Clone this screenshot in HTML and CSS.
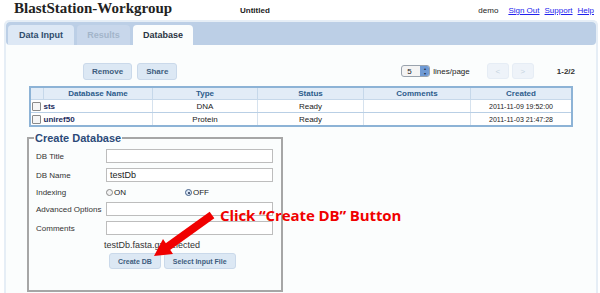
FILE: index.html
```html
<!DOCTYPE html>
<html lang="en">
<head>
    <meta charset="UTF-8">
    <title>BlastStation-Workgroup</title>
    <link rel="stylesheet" href="styles.css">
</head>
<body>
    <header class="topbar">
        <div class="brand">BlastStation-Workgroup</div>
        <div class="doc-title">Untitled</div>
        <div class="user">demo</div>
        <a href="#" class="toplink">Sign Out</a>
        <a href="#" class="toplink">Support</a>
        <a href="#" class="toplink">Help</a>
    </header>

    <div class="frame">
        <nav class="tabs">
            <a href="#" class="tab">Data Input</a>
            <a href="#" class="tab disabled">Results</a>
            <a href="#" class="tab active">Database</a>
        </nav>

        <div class="content">
            <div class="toolbar">
                <button class="button">Remove</button>
                <button class="button">Share</button>
                <div class="spacer"></div>
                <div class="select-box"><span>5</span><span class="stepper">&#9652;<br>&#9662;</span></div>
                <span class="per-page">lines/page</span>
                <button class="button faint">&lt;</button>
                <button class="button faint">&gt;</button>
                <span class="count">1-2/2</span>
            </div>

            <table class="db-table">
                <thead>
                    <tr>
                        <th class="cb"></th>
                        <th class="c-name">Database Name</th>
                        <th class="c-type">Type</th>
                        <th class="c-status">Status</th>
                        <th class="c-comments">Comments</th>
                        <th class="c-created">Created</th>
                    </tr>
                </thead>
                <tbody>
                    <tr>
                        <td class="cb"><span class="check"></span></td>
                        <td class="name">sts</td>
                        <td>DNA</td>
                        <td>Ready</td>
                        <td></td>
                        <td class="date">2011-11-09 19:52:00</td>
                    </tr>
                    <tr>
                        <td class="cb"><span class="check"></span></td>
                        <td class="name">uniref50</td>
                        <td>Protein</td>
                        <td>Ready</td>
                        <td></td>
                        <td class="date">2011-11-03 21:47:28</td>
                    </tr>
                </tbody>
            </table>

            <fieldset class="create">
                <legend>Create Database</legend>
                <div class="row">
                    <label>DB Title</label>
                    <span class="field"></span>
                </div>
                <div class="row">
                    <label>DB Name</label>
                    <span class="field">testDb</span>
                </div>
                <div class="row radios">
                    <label>Indexing</label>
                    <span class="radio"><span class="dot"></span>ON</span>
                    <span class="radio"><span class="dot on"></span>OFF</span>
                </div>
                <div class="row">
                    <label>Advanced Options</label>
                    <span class="field"></span>
                </div>
                <div class="row">
                    <label>Comments</label>
                    <span class="field"></span>
                </div>
                <div class="selected">testDb.fasta.gz selected</div>
                <div class="actions">
                    <button class="button small">Create DB</button>
                    <button class="button small">Select Input File</button>
                </div>
            </fieldset>
        </div>
    </div>

    <div class="callout">Click &ldquo;Create DB&rdquo; Button</div>
    <svg class="arrow" width="80" height="60" viewBox="0 0 80 60">
        <line x1="66" y1="7" x2="20" y2="40" stroke="#f00000" stroke-width="8"/>
        <polygon points="8,48 17,31 27,46" fill="#f00000"/>
    </svg>
</body>
</html>
```

FILE: styles.css
```css
body {
    margin: 0;
    background-color: white;
    font-family: "Liberation Sans", Arial, sans-serif;
    font-size: 8px;
    color: #222;
    position: relative;
    height: 293px;
    overflow: hidden;
}

.topbar {
    display: flex;
    align-items: flex-end;
    height: 17px;
    padding: 0 6px 0 14px;
    white-space: nowrap;
}

.brand {
    font-family: "Liberation Serif", "Times New Roman", serif;
    font-weight: bold;
    font-size: 15px;
    line-height: 17px;
    width: 226px;
}

.doc-title {
    font-weight: bold;
    font-size: 8px;
    line-height: 12px;
    flex-grow: 1;
}

.user {
    line-height: 12px;
    margin-right: 10px;
}

.toplink {
    color: #2222ee;
    line-height: 12px;
    margin-right: 5px;
}

.toplink:last-child {
    margin-right: 0;
}

.frame {
    margin: 3px 2px 0 4px;
    border: 2px solid #e6eef6;
    border-bottom: none;
    border-radius: 5px 5px 0 0;
    height: 273px;
    background-color: #fbfdfd;
}

.tabs {
    display: flex;
    align-items: flex-end;
    height: 23px;
    background-color: #bccfe6;
    border-radius: 4px;
    padding: 0 2px;
}

.tab {
    display: block;
    height: 20px;
    line-height: 20px;
    margin-right: 3px;
    border-radius: 4px 4px 0 0;
    background-color: #dde8f5;
    color: #304c6c;
    font-weight: bold;
    font-size: 9px;
    text-decoration: none;
    text-align: center;
    width: 66px;
}

.tab.disabled {
    width: 53px;
    background-color: #c8d7eb;
    color: #a3b5ca;
}

.tab.active {
    width: 60px;
    height: 23px;
    margin-bottom: -3px;
    background-color: #fbfdfd;
    color: #2a3442;
}

.content {
    padding: 17px 23px 0 23px;
}

.toolbar {
    display: flex;
    align-items: center;
    width: 546px;
    height: 18px;
    padding-left: 54px;
    box-sizing: border-box;
    white-space: nowrap;
}

.button {
    font-family: "Liberation Sans", Arial, sans-serif;
    font-size: 8px;
    font-weight: bold;
    color: #3e5d7e;
    background-color: #dce8f4;
    border: 1px solid #cad9ea;
    border-radius: 3px;
    height: 17px;
    padding: 0 8px;
    margin-right: 5px;
}

.button.faint {
    width: 22px;
    height: 16px;
    padding: 0;
    margin-right: 3px;
    background-color: #eef3f9;
    border-color: #e6edf5;
    color: #c6d3e0;
    font-weight: normal;
}

.spacer {
    flex-grow: 1;
}

.select-box {
    display: flex;
    align-items: center;
    justify-content: space-between;
    width: 29px;
    height: 12px;
    border: 1px solid #9aa3ad;
    border-radius: 3px;
    background-color: #f4f4f4;
    padding-left: 5px;
    box-sizing: border-box;
    margin-right: 3px;
    font-size: 8px;
}

.stepper {
    width: 9px;
    height: 10px;
    background-color: #6f9ad4;
    color: #1a2a44;
    font-size: 4px;
    line-height: 5px;
    text-align: center;
    border-radius: 0 2px 2px 0;
}

.per-page {
    margin-right: 17px;
}

.count {
    margin-left: 20px;
    font-weight: bold;
    color: #333;
}

.db-table {
    width: 544px;
    margin: 6px 0 0 0;
    border-collapse: collapse;
    border: 2px solid #8db3d6;
    font-size: 8px;
}

.db-table th {
    height: 11px;
    padding: 0;
    background-color: #e2ecf7;
    color: #2d5c8c;
    font-weight: bold;
    border-left: 1px solid #c6d8ea;
    border-bottom: 1px solid #c6d8ea;
}

.db-table td {
    height: 12px;
    padding: 0;
    text-align: center;
    background-color: white;
    border-left: 1px solid #d6e2ee;
    border-bottom: 1px solid #b9cfe5;
}

.db-table .cb {
    width: 11px;
    text-align: left;
    padding-left: 1px;
}

.c-name { width: 108px; }
.c-type { width: 104px; }
.c-status { width: 105px; }
.c-comments { width: 106px; }

.db-table td.name {
    text-align: left;
    border-left: none;
    color: #1c2c5c;
    font-weight: bold;
}

.db-table td.date {
    font-size: 7px;
}

.check {
    display: inline-block;
    width: 7px;
    height: 7px;
    border: 1px solid #8a8a8a;
    border-radius: 1px;
    background-color: #f6f6f6;
    vertical-align: middle;
}

.create {
    width: 256px;
    height: 160px;
    box-sizing: border-box;
    margin: 5px 0 0 -2px;
    padding: 5px 8px 0 7px;
    border: 2px solid #a6a6a6;
    min-width: 0;
}

.create legend {
    color: #2b4a78;
    font-weight: bold;
    font-size: 11px;
    padding: 0 1px;
    margin-left: -2px;
}

.row {
    display: flex;
    align-items: center;
    height: 14px;
    margin-bottom: 5px;
}

.row label {
    width: 70px;
    font-size: 8px;
    color: #333;
}

.field {
    flex-grow: 1;
    height: 14px;
    box-sizing: border-box;
    border: 1px solid #bdbdbd;
    background-color: white;
    padding-left: 3px;
    font-size: 9px;
    line-height: 12px;
}

.row.radios {
    height: 11px;
    margin-top: 5px;
    margin-bottom: 4px;
}

.radio {
    display: flex;
    align-items: center;
    width: 79px;
}

.dot {
    display: inline-block;
    width: 7px;
    height: 7px;
    border: 1px solid #8a8a8a;
    border-radius: 50%;
    background-color: #f2f2f2;
    margin-right: 1px;
    box-sizing: border-box;
    position: relative;
}

.dot.on {
    border-color: #44608a;
    background-color: #dbe7f5;
}

.dot.on::after {
    content: "";
    position: absolute;
    left: 1.5px;
    top: 1.5px;
    width: 2px;
    height: 2px;
    border-radius: 50%;
    background-color: #1c2c4c;
}

.selected {
    padding-left: 68px;
    font-size: 9px;
    color: #333;
    margin-top: 0;
}

.actions {
    display: flex;
    padding-left: 73px;
    margin-top: 3px;
}

.button.small {
    height: 16px;
    padding: 0 8px;
    font-size: 7px;
    margin-right: 3px;
}

.callout {
    position: absolute;
    left: 220px;
    top: 205px;
    color: #f00000;
    font-family: "Open Sans", sans-serif;
    font-weight: bold;
    font-size: 15px;
    letter-spacing: -0.1px;
    white-space: nowrap;
}

.arrow {
    position: absolute;
    left: 146px;
    top: 208px;
}
```
